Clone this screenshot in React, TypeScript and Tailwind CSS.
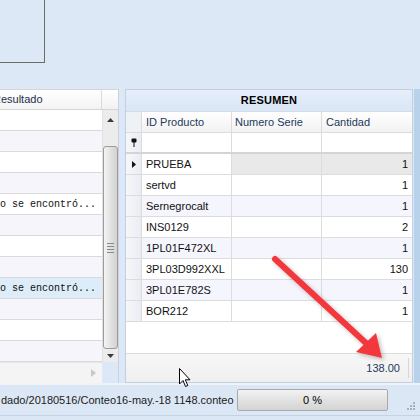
import React from "react"

const font = { fontFamily: '"Liberation Sans", Arial, sans-serif' }

const leftRows = [
    { text: "", bg: "bg-white" },
    { text: "", bg: "bg-[#f6f5fc]" },
    { text: "", bg: "bg-white" },
    { text: "", bg: "bg-[#f6f5fc]" },
    { text: "No se encontró...", bg: "bg-white" },
    { text: "", bg: "bg-[#f6f5fc]" },
    { text: "", bg: "bg-white" },
    { text: "", bg: "bg-[#f6f5fc]" },
    { text: "No se encontró...", bg: "bg-[#dcecf8]" },
    { text: "", bg: "bg-[#f6f5fc]" },
    { text: "", bg: "bg-white" },
    { text: "", bg: "bg-[#f6f5fc]" },
]

const resumen = [
    { id: "PRUEBA", qty: "1" },
    { id: "sertvd", qty: "1" },
    { id: "Sernegrocalt", qty: "1" },
    { id: "INS0129", qty: "2" },
    { id: "1PL01F472XL", qty: "1" },
    { id: "3PL03D992XXL", qty: "130" },
    { id: "3PL01E782S", qty: "1" },
    { id: "BOR212", qty: "1" },
]

const LeftGrid = () => {
    return (
        <div className="flex flex-col w-[119px] h-[294px] border-r border-[#c9d3dd] bg-white">
            {/* header */}
            <div className="flex h-[21px] border-t border-b border-[#d5d5d5]">
                <div className="flex-1 flex items-center overflow-hidden bg-gradient-to-b from-white to-[#f3f3f3] border-r border-[#dadada]">
                    <span className="ml-[-7px] text-[11px] text-[#1e2e4a] whitespace-nowrap">Resultado</span>
                </div>
                <div className="w-[16px] bg-gradient-to-b from-white to-[#f1f1f1]" />
            </div>
            <div className="flex flex-1">
                {/* rows */}
                <div className="flex-1 flex flex-col overflow-hidden">
                    {leftRows.map((r, i) => (
                        <div key={i} className={`h-[21px] shrink-0 flex items-center border-b border-[#dadada] ${r.bg}`}>
                            <span
                                className="ml-[-6px] text-[10px] text-[#111] whitespace-nowrap"
                                style={{ fontFamily: '"Liberation Mono", "DejaVu Sans Mono", monospace' }}
                            >
                                {r.text}
                            </span>
                        </div>
                    ))}
                    <div className="flex-1 flex items-center justify-end pr-[6px] bg-[#f4f4f4] border-t border-[#e6e6e6]">
                        <svg width="5" height="8" viewBox="0 0 5 8"><path d="M0 0 L5 4 L0 8Z" fill="#c8c8c8" /></svg>
                    </div>
                </div>
                {/* vertical scrollbar */}
                <div className="w-[16px] flex flex-col">
                    <div className="flex-1 flex flex-col items-center bg-[#ececec] border-l border-[#e2e2e2]">
                        <div className="h-[20px] flex items-center justify-center">
                            <svg width="7" height="4" viewBox="0 0 7 4"><path d="M0 4 L3.5 0 L7 4Z" fill="#3a3a3a" /></svg>
                        </div>
                        <div className="mt-[16px] h-[203px] w-[15px] rounded-[3px] border border-[#9b9b9b] bg-gradient-to-r from-[#f4f4f4] via-[#e2e2e2] to-[#d2d2d2] flex items-center justify-center">
                            <div className="flex flex-col gap-[2px]">
                                <div className="w-[7px] h-px bg-[#8a8a8a]" />
                                <div className="w-[7px] h-px bg-[#8a8a8a]" />
                                <div className="w-[7px] h-px bg-[#8a8a8a]" />
                                <div className="w-[7px] h-px bg-[#8a8a8a]" />
                            </div>
                        </div>
                        <div className="flex-1 flex items-center justify-center">
                            <svg width="7" height="4" viewBox="0 0 7 4"><path d="M0 0 L7 0 L3.5 4Z" fill="#3a3a3a" /></svg>
                        </div>
                    </div>
                    <div className="h-[21px] bg-[#dde8f6]" />
                </div>
            </div>
        </div>
    )
}

const ResumenPanel = () => {
    return (
        <div className="flex flex-col w-[288px] h-[294px] border border-[#c3cfdc] bg-white">
            <div className="h-[22px] flex items-center justify-center bg-gradient-to-b from-[#e6eefa] to-[#d9e6f6] border-b border-[#d3dbe6]">
                <span className="text-[11px] font-bold text-black tracking-[0.2px]">RESUMEN</span>
            </div>
            {/* column headers */}
            <div className="flex h-[21px] border-b border-[#dcdcdc] bg-gradient-to-b from-white to-[#f2f2f2] text-[11px] text-[#1e395b]">
                <div className="w-[16px] border-r border-[#dcdcdc] bg-[#eef1f6]" />
                <div className="w-[90px] border-r border-[#dcdcdc] flex items-center pl-[4px]">ID Producto</div>
                <div className="w-[90px] border-r border-[#dcdcdc] flex items-center pl-[3px]">Numero Serie</div>
                <div className="flex-1 flex items-center pl-[4px]">Cantidad</div>
            </div>
            {/* filter row */}
            <div className="flex h-[21px] border-b-[2px] border-[#d4d4d4]">
                <div className="w-[16px] border-r border-[#dcdcdc] bg-gradient-to-r from-[#f6f7fa] to-[#e9edf3] flex items-center justify-center">
                    <svg width="6" height="9" viewBox="0 0 6 9">
                        <rect x="0.5" y="0.5" width="5" height="4" rx="1" fill="#111" />
                        <rect x="2.5" y="4" width="1" height="5" fill="#111" />
                    </svg>
                </div>
                <div className="w-[90px] border-r border-[#dcdcdc]" />
                <div className="w-[90px] border-r border-[#dcdcdc]" />
                <div className="flex-1" />
            </div>
            {/* data rows */}
            {resumen.map((r, i) => {
                const rowBg = i % 2 === 0 && i > 0 ? "bg-[#f5f5fd]" : "bg-white"
                const other = i === 0 ? "bg-[#e9e9e9]" : rowBg
                return (
                    <div key={r.id} className="flex h-[21px] border-b border-[#dcdcdc] text-[11px] text-[#111]">
                        <div className="w-[16px] border-r border-[#dcdcdc] bg-gradient-to-r from-[#f6f7fa] to-[#e9edf3] flex items-center justify-center">
                            {i === 0 && (
                                <svg width="4" height="7" viewBox="0 0 4 7"><path d="M0 0 L4 3.5 L0 7Z" fill="#111" /></svg>
                            )}
                        </div>
                        <div className={`w-[90px] border-r border-[#dcdcdc] flex items-center pl-[4px] ${rowBg}`}>{r.id}</div>
                        <div className={`w-[90px] border-r border-[#dcdcdc] ${other}`} />
                        <div className={`flex-1 flex items-center justify-end pr-[4px] ${other}`}>{r.qty}</div>
                    </div>
                )
            })}
            <div className="flex-1 border-b border-[#dcdcdc]" />
            {/* footer */}
            <div className="h-[28px] flex items-center justify-end bg-gradient-to-b from-[#f7f7f7] to-[#efefef]">
                <span className="text-[11px] text-[#1e395b] pr-[8px]">138.00</span>
                <div className="w-px h-[20px] bg-[#d6d6d6] mr-[3px]" />
            </div>
        </div>
    )
}

export default function App() {
    return (
        <div className="relative w-[420px] h-[420px] overflow-hidden bg-[#dde8f6] flex flex-col" style={font}>
            {/* top area */}
            <div className="h-[89px] shrink-0">
                <div className="w-[45px] h-[63px] border-r border-b border-[#6b6b6b]" />
            </div>
            {/* main */}
            <div className="flex h-[294px] shrink-0">
                <LeftGrid />
                <div className="w-[6px]" />
                <ResumenPanel />
                <div className="w-px bg-[#dde8f6]" />
                <div className="flex-1 bg-[#b9d2ec]" />
            </div>
            {/* status bar */}
            <div className="h-[32px] shrink-0 flex items-center border-t-[2px] border-[#edf3fb] bg-[#dce7f5]">
                <span className="ml-[1px] w-[236px] text-[11px] text-[#1b1b1b] whitespace-nowrap overflow-hidden">
                    dado/20180516/Conteo16-may.-18 1148.conteo
                </span>
                <div className="w-[151px] h-[22px] rounded-[2px] border border-[#a9a9a9] bg-gradient-to-b from-[#f3f3f3] via-[#e2e2e2] to-[#d4d4d4] flex items-center justify-center">
                    <span className="text-[11px] text-black">0 %</span>
                </div>
                <div className="flex-1 self-end pb-[3px] flex justify-end pr-[5px]">
                    <svg width="10" height="10" viewBox="0 0 10 10" fill="#a4b1c2">
                        <rect x="8" y="0" width="2" height="2" />
                        <rect x="5" y="3" width="2" height="2" />
                        <rect x="8" y="3" width="2" height="2" />
                        <rect x="2" y="6" width="2" height="2" />
                        <rect x="5" y="6" width="2" height="2" />
                        <rect x="8" y="6" width="2" height="2" />
                    </svg>
                </div>
            </div>
            <div className="flex-1 border-t border-[#c4d3e6] bg-[#dce7f5]" />

            {/* annotation arrow */}
            <svg className="absolute left-0 top-0 pointer-events-none" width="420" height="420" viewBox="0 0 420 420">
                <defs>
                    <filter id="sh" x="-20%" y="-20%" width="140%" height="140%">
                        <feDropShadow dx="2" dy="2" stdDeviation="2" floodColor="#000" floodOpacity="0.25" />
                    </filter>
                </defs>
                <g filter="url(#sh)">
                    <line x1="275" y1="259" x2="367" y2="344" stroke="#f2393d" strokeWidth="6" strokeLinecap="round" />
                    <path d="M382 358 L356 352 L376 333 Z" fill="#f2393d" />
                </g>
            </svg>

            {/* mouse cursor */}
            <svg className="absolute left-[179px] top-[368px] pointer-events-none" width="13" height="20" viewBox="0 0 13 20">
                <path d="M0.5 0.5 L0.5 16 L4 12.5 L6.5 18.5 L8.8 17.5 L6.3 11.8 L11 11.8 Z" fill="#fff" stroke="#000" strokeWidth="1" strokeLinejoin="round" />
            </svg>
        </div>
    )
}
